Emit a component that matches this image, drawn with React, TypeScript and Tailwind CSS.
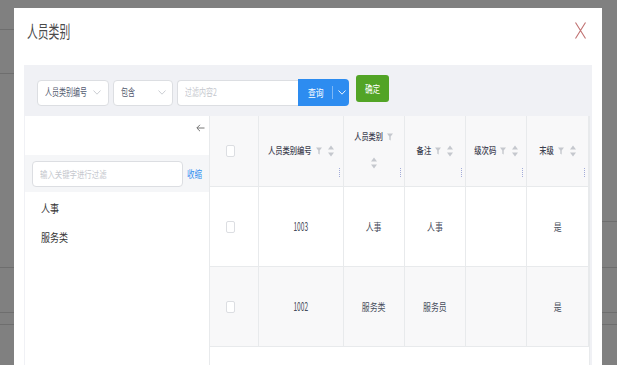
import { ReactNode } from 'react'

const CN = "font-['Noto_Sans_CJK_SC','Noto_Sans',sans-serif]"

function T({ children, className = '' }: { children: ReactNode; className?: string }) {
    return <span className={'inline-block leading-none whitespace-nowrap ' + className}>{children}</span>
}

function Chevron({ color = '#c5c8ce' }: { color?: string }) {
    return (
        <svg width="8" height="5" viewBox="0 0 8 5" className="shrink-0">
            <polyline points="0.5,0.5 4,4.2 7.5,0.5" fill="none" stroke={color} strokeWidth="0.9" />
        </svg>
    )
}

function FilterIcon() {
    return (
        <svg width="6" height="8" viewBox="0 0 6 8" className="shrink-0">
            <path d="M0 0.5H6L3.7 3.6V7.6L2.3 6.8V3.6Z" fill="#c5c8ce" />
        </svg>
    )
}

function SortIcon() {
    return (
        <svg width="6" height="12" viewBox="0 0 6 12" className="shrink-0">
            <path d="M3 0.5L6 4.6H0Z" fill="#c5c8ce" />
            <path d="M3 11.5L6 7.4H0Z" fill="#c5c8ce" />
        </svg>
    )
}

function Checkbox() {
    return <span className="block w-[9px] h-[12px] border border-[#dcdee2] rounded-[2px] bg-white" />
}

function Resizer() {
    return <span className="absolute right-[3px] bottom-[9px] h-[9px] border-l-[1.5px] border-dotted border-[#a3acd9]" />
}

const cols = [
    { key: 'code', title: '人员类别编号', w: 'w-[85px]' },
    { key: 'name', title: '人员类别', w: 'w-[61px]', wrap: true },
    { key: 'remark', title: '备注', w: 'w-[62px]' },
    { key: 'level', title: '级次码', w: 'w-[61px]' },
    { key: 'leaf', title: '末级', w: 'w-[62px]' },
] as const

type Row = { code: string; name: string; remark: string; level: string; leaf: string }

const rows: Row[] = [
    { code: '1003', name: '人事', remark: '人事', level: '', leaf: '是' },
    { code: '1002', name: '服务类', remark: '服务员', level: '', leaf: '是' },
]

function Toolbar() {
    return (
        <div className="h-[51px] flex items-start pt-[10px] pl-[12px]">
            <div className="mt-[4px] flex items-center">
                {/* field select */}
                <div className="w-[72px] h-[26px] bg-white border border-[#dcdee2] rounded-[4px] flex items-center pl-[7px] pr-[7px] justify-between">
                    <T className="text-[7px] scale-y-[1.4] text-[#515a6e]">人员类别编号</T>
                    <Chevron />
                </div>
                <div className="ml-[4px] w-[60px] h-[26px] bg-white border border-[#dcdee2] rounded-[4px] flex items-center pl-[7px] pr-[6px] justify-between">
                    <T className="text-[7px] scale-y-[1.4] text-[#515a6e]">包含</T>
                    <Chevron />
                </div>
                <div className="ml-[4px] w-[121px] h-[26px] bg-white border border-[#dcdee2] border-r-0 rounded-l-[4px] flex items-center pl-[7px]">
                    <T className="text-[7px] scale-y-[1.4] text-[#c5c8ce]">过滤内容2</T>
                </div>
                <div className="w-[51px] h-[27px] bg-[#2d8cf0] rounded-r-[4px] flex items-center pl-[10px] text-white">
                    <T className="text-[7.8px] scale-y-[1.3]">查询</T>
                    <span className="ml-[8px] w-px h-[13px] bg-[#7db7f5]" />
                    <span className="ml-[5px]">
                        <Chevron color="#ffffff" />
                    </span>
                </div>
            </div>
            <div className="ml-[7px] w-[33px] h-[27px] bg-[#52a426] rounded-[3px] flex items-center justify-center text-white">
                <T className="text-[7.6px] scale-y-[1.3]">确定</T>
            </div>
        </div>
    )
}

function TreePanel() {
    return (
        <div className="w-[185px] shrink-0 border-r border-[#e8eaec] bg-white">
            <div className="h-[39px] flex justify-end pr-[4px] pt-[8px]">
                <svg width="9" height="8" viewBox="0 0 9 8">
                    <path d="M8.5 4H1M4 0.8L0.8 4L4 7.2" fill="none" stroke="#666" strokeWidth="0.9" />
                </svg>
            </div>
            <div className="h-[37px] bg-[#f5f6f8] flex items-center pl-[7px]">
                <div className="w-[151px] h-[26px] bg-white border border-[#dcdee2] rounded-[4px] flex items-center pl-[7px]">
                    <T className="text-[7.4px] scale-y-[1.3] text-[#c5c8ce]">输入关键字进行过滤</T>
                </div>
                <T className="ml-[4px] text-[7.5px] scale-y-[1.3] text-[#2d8cf0]">收缩</T>
            </div>
            <div className="pt-[2px] pl-[16px] text-[#333]">
                <div className="h-[29px] flex items-center">
                    <T className="text-[9px] scale-y-[1.2]">人事</T>
                </div>
                <div className="h-[29px] flex items-center">
                    <T className="text-[9px] scale-y-[1.2]">服务类</T>
                </div>
            </div>
        </div>
    )
}

function HeaderCell({ title, w, wrap }: { title: string; w: string; wrap?: boolean }) {
    return (
        <div className={'relative h-full border-r border-[#e8eaec] flex items-center justify-center ' + w}>
            {wrap ? (
                <div className="flex flex-col items-center gap-[16px]">
                    <div className="flex items-center">
                        <T className="text-[7.2px] scale-y-[1.3] font-medium text-[#3d4150]">{title}</T>
                        <span className="ml-[4px]"><FilterIcon /></span>
                    </div>
                    <SortIcon />
                </div>
            ) : (
                <div className="flex items-center">
                    <T className="text-[7.3px] scale-y-[1.3] font-medium text-[#3d4150]">{title}</T>
                    <span className="ml-[4px]"><FilterIcon /></span>
                    <span className="ml-[6px]"><SortIcon /></span>
                </div>
            )}
            <Resizer />
        </div>
    )
}

function Cell({ value, w }: { value: string; w: string }) {
    const numeric = /^\d+$/.test(value)
    return (
        <div className={'h-full border-r border-[#e8eaec] flex items-center justify-center text-[#464c5b] ' + w}>
            {value && (numeric ? (
                <T className="text-[6.6px] scale-y-[1.9]">{value}</T>
            ) : (
                <T className="text-[7.9px] scale-y-[1.3]">{value}</T>
            ))}
        </div>
    )
}

function DataTable() {
    return (
        <div className="w-[380px] shrink-0 bg-white border-r border-[#e8eaec]">
            <div className="h-[71px] flex bg-[#f8f8f9] border-b border-[#e8eaec]">
                <div className="w-[49px] h-full border-r border-[#e8eaec] flex items-center justify-center pr-[6px]">
                    <Checkbox />
                </div>
                {cols.map(c => (
                    <HeaderCell key={c.key} title={c.title} w={c.w} wrap={'wrap' in c} />
                ))}
            </div>
            {rows.map((r, i) => (
                <div
                    key={r.code}
                    className={'h-[80px] flex border-b border-[#e8eaec] ' + (i % 2 === 1 ? 'bg-[#f8f8f9]' : 'bg-white')}
                >
                    <div className="w-[49px] h-full border-r border-[#e8eaec] flex items-center justify-center pr-[6px]">
                        <Checkbox />
                    </div>
                    {cols.map(c => (
                        <Cell key={c.key} value={r[c.key]} w={c.w} />
                    ))}
                </div>
            ))}
        </div>
    )
}

export default function App() {
    return (
        <div className={'relative w-[617px] h-[365px] overflow-hidden bg-[#808080] ' + CN}>
            {/* dimmed page behind the dialog */}
            <div className="flex flex-col">
                <div className="h-[30px] w-[14px] border-b border-[#6e6e6e]" />
                <div className="h-[44px] w-[14px] border-b border-[#6e6e6e]" />
                <div className="h-[148px] w-[15px] self-end border-b border-[#6e6e6e]" />
                <div className="h-[46px] border-b border-[#6e6e6e]" />
                <div className="h-[45px] border-b border-[#6e6e6e]" />
                <div className="h-[12px] border-b border-[#6e6e6e]" />
            </div>

            {/* dialog */}
            <div className="absolute left-[14px] top-[8px] w-[588px] h-[400px] bg-white flex flex-col">
                <div className="h-[44px] flex items-center justify-between pl-[13px] pr-[16px]">
                    <T className="text-[10.8px] scale-y-[1.55] text-[#4a4a4a]">人员类别</T>
                    <svg width="11" height="17" viewBox="0 0 11 17">
                        <path d="M0.5 0.5L10.5 16.5M10.5 0.5L0.5 16.5" stroke="#c07070" strokeWidth="1.1" fill="none" />
                    </svg>
                </div>
                <div className="mt-[13px] mx-[10px] flex-1 bg-[#f0f1f5] pl-[1px] pr-[2px] flex flex-col">
                    <Toolbar />
                    <div className="flex flex-1">
                        <TreePanel />
                        <DataTable />
                    </div>
                </div>
            </div>
        </div>
    )
}
